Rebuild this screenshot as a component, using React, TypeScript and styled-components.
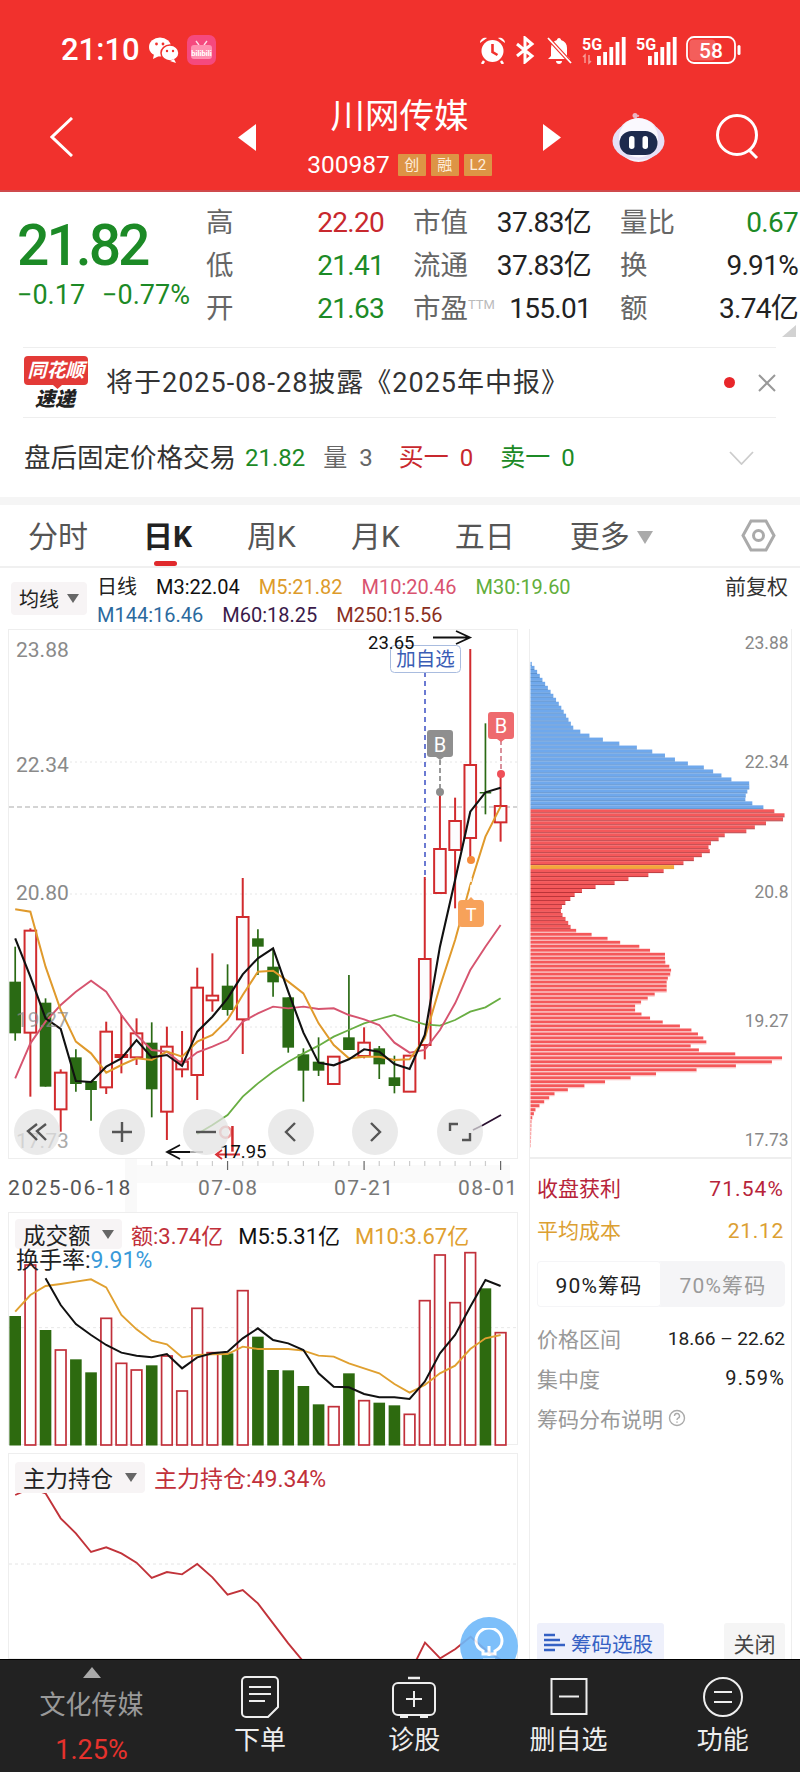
import React from "react";
import styled, { createGlobalStyle } from "styled-components";

const FONT = `Roboto, "Noto Sans CJK SC", sans-serif`;
const RED = "#c8282e";
const GREEN = "#1c8a26";

const Global = createGlobalStyle`
  html, body { margin: 0; padding: 0; background: #fff; }
  body { font-family: ${FONT}; }
  * { box-sizing: border-box; }
`;

const Page = styled.div`
  width: 800px; height: 1772px; display: flex; flex-direction: column; overflow: hidden; background: #fff;
`;

/* ---------- header ---------- */
const Header = styled.header`
  height: 192px; background: #f1312d; border-bottom: 2px solid #cf4a4c; color: #fff; flex: none;
`;
const StatusBar = styled.div`
  height: 87px; padding: 13px 59px 0 61px; display: flex; align-items: center; justify-content: space-between;
`;
const StatusGroup = styled.div<{ $gap: number }>`
  display: flex; align-items: center; gap: ${(p) => p.$gap}px;
`;
const Clock = styled.span`
  font-size: 31px; font-weight: 500; line-height: 36px; margin-right: 1px;
`;
const Nav = styled.div`
  height: 100px; padding-left: 50px; display: flex; align-items: center;
`;
const Spacer = styled.div<{ $w: number }>`
  width: ${(p) => p.$w}px; flex: none;
`;
const Filler = styled.div`
  flex: 1;
`;
const TitleCol = styled.div`
  width: 287px; display: flex; flex-direction: column; align-items: center; flex: none;
`;
const Title = styled.div`
  font-size: 34.5px; line-height: 40px; height: 40px; font-weight: 400;
`;
const SubLine = styled.div`
  margin-top: 16px; height: 26px; display: flex; align-items: center; gap: 5px;
`;
const Code = styled.span`
  font-size: 24.5px; line-height: 26px; margin-right: 3px;
`;
const Tag = styled.span`
  height: 22px; min-width: 28px; padding: 0 3px; background: #dd9445; color: #fdeedd; font-size: 15px; line-height: 22px;
  text-align: center; border-radius: 1px;
`;

/* ---------- quote ---------- */
const Quote = styled.section`
  position: relative; height: 155px; display: flex; padding-left: 17px; flex: none;
`;
const PriceCol = styled.div`
  width: 189px; padding-top: 24px; flex: none;
`;
const BigPrice = styled.div`
  font-size: 57px; line-height: 60px; font-weight: 500; color: ${GREEN}; letter-spacing: -3px;
`;
const Change = styled.div`
  margin-top: 4px; font-size: 27px; line-height: 30px; color: ${GREEN}; display: flex; gap: 17px; white-space: nowrap;
`;
const QuoteGrid = styled.div`
  padding-top: 9px; display: grid; grid-template-columns: repeat(3, 178px); column-gap: 29px; grid-auto-rows: 43px;
`;
const Cell = styled.div`
  display: flex; align-items: center; justify-content: space-between; white-space: nowrap;
`;
const CellLabel = styled.span`
  font-size: 27.5px; line-height: 43px; color: #666;
`;
const Ttm = styled.span`
  font-size: 13px; color: #bbb; vertical-align: 9px; line-height: 0; letter-spacing: 0;
`;
const CellValue = styled.span<{ $c?: string }>`
  font-size: 28px; line-height: 43px; letter-spacing: -0.7px; color: ${(p) => p.$c || "#222"};
`;
const CornerMark = styled.i`
  position: absolute; right: 4px; top: 133px; width: 0; height: 0; border-style: solid;
  border-width: 0 0 12px 14px; border-color: transparent transparent #d2d2d2 transparent;
`;

/* ---------- notice & trade rows ---------- */
const Notice = styled.div`
  margin: 0 24px 0 23px; height: 71px; flex: none; display: flex; align-items: center;
  border-top: 1px solid #eee; border-bottom: 1px solid #eee;
`;
const NoticeText = styled.span`
  margin-left: 18px; font-size: 27px; line-height: 34px; color: #333; white-space: nowrap; letter-spacing: 1px;
`;
const Dot = styled.i`
  margin-left: auto; width: 11px; height: 11px; border-radius: 50%; background: #e8262a;
`;
const TradeRow = styled.div`
  height: 79px; flex: none; padding: 0 46px 0 24px; display: flex; align-items: center; white-space: nowrap;
`;
const TradeText = styled.span<{ $c: string; $ml?: number; $size?: number }>`
  color: ${(p) => p.$c}; margin-left: ${(p) => p.$ml || 0}px; font-size: ${(p) => p.$size || 26.5}px; line-height: 34px;
`;
const Band = styled.div`
  height: 8px; background: #f5f5f5; flex: none;
`;

/* ---------- period tabs ---------- */
const Tabs = styled.nav`
  height: 63px; flex: none; padding: 3px 24px 0 28px; display: flex; align-items: center; gap: 55px;
  border-bottom: 2px solid #f0f0f0;
`;
const Tab = styled.span<{ $active?: boolean }>`
  position: relative; font-size: 30px; line-height: 40px; white-space: nowrap;
  color: ${(p) => (p.$active ? "#222" : "#555")}; font-weight: ${(p) => (p.$active ? 700 : 400)};
  display: flex; align-items: center;
  &::after {
    content: ""; display: ${(p) => (p.$active ? "block" : "none")}; position: absolute; left: 11px; top: 44px;
    width: 23px; height: 5px; border-radius: 3px; background: #e0292c;
  }
`;
const MoreArrow = styled.i`
  margin-left: 7px; width: 0; height: 0; border-style: solid; border-width: 13px 8.5px 0 8.5px;
  border-color: #aaa transparent transparent transparent;
`;
const SettingsIcon = styled.svg`
  margin-left: auto; flex: none; margin-top: -3px;
`;

/* ---------- MA legend ---------- */
const MaBar = styled.div`
  height: 61px; flex: none; padding: 6px 12px 0 11px; display: flex; align-items: flex-start;
`;
const DropBtn = styled.div<{ $w: number; $h: number; $size: number }>`
  width: ${(p) => p.$w}px; height: ${(p) => p.$h}px; background: #f7f4f5; border-radius: 4px; flex: none;
  display: flex; align-items: center; justify-content: space-between; padding: 0 8px 0 8px;
  font-size: ${(p) => p.$size}px; color: #222; white-space: nowrap;
`;
const MaBtnWrap = styled.div`
  padding-top: 8px;
`;
const Caret = styled.i`
  width: 0; height: 0; border-style: solid; border-width: 9px 6.5px 0 6.5px; border-color: #666 transparent transparent transparent;
`;
const MaLines = styled.div`
  margin-left: 10px;
`;
const MaLine = styled.div`
  display: flex; gap: 19px; height: 28px; line-height: 27px; font-size: 20px; white-space: nowrap;
`;
const MaItem = styled.span<{ $c: string }>`
  color: ${(p) => p.$c};
`;
const Restore = styled.span`
  margin-left: auto; font-size: 21px; line-height: 27px; color: #333;
`;

/* ---------- chart area ---------- */
const ChartArea = styled.main`
  height: 1030px; flex: none; overflow: hidden; padding: 0 8px; display: flex; gap: 11px;
`;
const LeftCol = styled.div`
  width: 510px; flex: none; display: flex; flex-direction: column;
`;
const RightCol = styled.aside`
  width: 263px; flex: none; height: 1030px; display: flex; flex-direction: column;
  border-left: 1px solid #eee; border-right: 1px solid #eee;
`;
const ChartPanel = styled.div<{ $h: number }>`
  position: relative; height: ${(p) => p.$h}px; flex: none; box-shadow: inset 0 0 0 1px #eee;
  svg.plot { display: block; overflow: visible; }
`;
const ControlRow = styled.div`
  position: absolute; left: 6px; bottom: 4px; display: flex; gap: 38.6px;
`;
const RoundBtn = styled.div`
  width: 46px; height: 46px; border-radius: 50%; background: rgba(226, 226, 226, 0.72);
  display: flex; align-items: center; justify-content: center;
`;
const Axis = styled.svg`
  display: block; flex: none;
`;
const Legend = styled.div<{ $top: number }>`
  position: absolute; left: 7px; top: ${(p) => p.$top}px; display: flex; align-items: center; font-size: 22px; white-space: nowrap;
`;
const LegendValue = styled.span<{ $c: string; $ml: number; $size?: number }>`
  color: ${(p) => p.$c}; margin-left: ${(p) => p.$ml}px; font-size: ${(p) => p.$size || 22}px;
`;
const TurnoverLine = styled.div`
  position: absolute; left: 8px; top: 35px; font-size: 23px; line-height: 28px; color: #222; white-space: nowrap;
`;
const TurnoverValue = styled.span`
  color: #3a9ad9;
`;
const Gap = styled.div`
  height: 8px; flex: none;
`;
const TipBulb = styled.div`
  position: absolute; left: 452px; top: 164px; width: 58px; height: 58px; border-radius: 50%; background: #6fb9fa; opacity: .9;
  display: flex; align-items: flex-start; justify-content: center; padding-top: 11px;
`;
const SvgLabel = styled.text<{ $size: number; $c: string; $o?: number }>`
  font-family: ${FONT}; font-size: ${(p) => p.$size}px; fill: ${(p) => p.$c}; opacity: ${(p) => p.$o ?? 1};
`;
const GlyphSvg = styled.svg`
  display: block; flex: none; overflow: visible;
`;

/* ---------- chip side panel ---------- */
const ChipPlot = styled.svg`
  display: block; flex: none; border-bottom: 2px solid #eee;
`;
const SideBody = styled.div`
  padding: 9px 6px 0 7px; flex: 1;
`;
const SideStat = styled.div<{ $c: string }>`
  display: flex; justify-content: space-between; height: 42px; line-height: 42px; font-size: 21px; color: ${(p) => p.$c}; padding-right: 1px;
`;
const StatNumber = styled.span<{ $ls: number }>`
  letter-spacing: ${(p) => p.$ls}px;
`;
const Segment = styled.div`
  margin-top: 9px; height: 46px; background: #f5f5f7; border-radius: 5px; display: flex;
`;
const SegItem = styled.div<{ $on?: boolean }>`
  width: 124px; display: flex; align-items: center; justify-content: center; font-size: 21px; letter-spacing: 1.2px; border-radius: 4px;
  background: ${(p) => (p.$on ? "#fff" : "transparent")}; color: ${(p) => (p.$on ? "#222" : "#9a9a9a")};
  box-shadow: ${(p) => (p.$on ? "0 0 0 1px #f5f5f7 inset" : "none")};
`;
const DetailBlock = styled.div`
  margin-top: 11px;
`;
const DetailRow = styled.div`
  display: flex; justify-content: space-between; align-items: center; height: 40px; font-size: 20px; color: #222;
`;
const DetailLabel = styled.span`
  color: #999; font-size: 21px; display: flex; align-items: center; gap: 5px;
`;
const DetailNumber = styled.span<{ $size: number; $ls: number }>`
  font-size: ${(p) => p.$size}px; letter-spacing: ${(p) => p.$ls}px;
`;
const SideActions = styled.div`
  margin-top: 185px; display: flex; justify-content: space-between;
`;
const PickBtn = styled.div`
  width: 127px; height: 40px; background: #eef0fb; border-radius: 3px; display: flex; align-items: center; gap: 6px;
  padding-left: 7px; color: #3561c4; font-size: 20.5px; white-space: nowrap;
`;
const CloseBtn = styled.div`
  width: 61px; height: 40px; background: #f5f5f5; border-radius: 3px; display: flex; align-items: center; justify-content: center;
  color: #444; font-size: 21px;
`;

/* ---------- footer ---------- */
const Footer = styled.footer`
  height: 113px; flex: none; background: #222; border-top: 1px solid #000; display: grid; grid-template-columns: 183px repeat(4, 1fr);
`;
const SectorCell = styled.div`
  display: flex; flex-direction: column; align-items: center; padding-top: 7px;
`;
const UpTri = styled.i`
  width: 0; height: 0; border-style: solid; border-width: 0 9.5px 11px 9.5px; border-color: transparent transparent #aaa transparent;
`;
const SectorName = styled.div`
  margin-top: 10px; font-size: 26px; line-height: 34px; color: #999;
`;
const SectorValue = styled.div`
  margin-top: 11px; font-size: 27px; line-height: 34px; color: #e6322d;
`;
const ActionCell = styled.div`
  display: flex; flex-direction: column; align-items: center; padding-top: 16px;
`;
const ActionIcon = styled.svg`
  display: block; flex: none;
`;
const ActionLabel = styled.div`
  margin-top: 5px; font-size: 26px; line-height: 34px; color: #eee;
`;
const LogoMark = styled.svg`
  flex: none; margin-left: 1px; overflow: visible;
`;

/* ---------- data ---------- */
const X = (i: number) => (45 + 44.9 * i) / 2.96;
const zx = (v: number) => v / 2.96;
const K = (zy: number) => 880 + zy / 3;
const V = (zy: number) => 1200 + zy / 3;
const M = (zy: number) => 1440 + zy / 3;

type C = [0 | 1, number, number, number, number];
// up?, wickTop, wickBottom, bodyTop, bodyBottom  (in zoomed units)
const candles: C[] = [
  [0, 200, 482, 305, 460], [1, 145, 650, 152, 458], [0, 355, 620, 368, 620], [1, 568, 755, 578, 688],
  [0, 508, 635, 532, 612], [0, 603, 722, 603, 630], [1, 425, 642, 455, 622], [1, 405, 580, 525, 531],
  [1, 415, 555, 460, 532], [0, 427, 712, 488, 628], [1, 440, 780, 500, 695], [1, 453, 592, 545, 568],
  [1, 263, 660, 323, 585], [1, 220, 395, 347, 361], [0, 253, 407, 317, 390], [1, -6, 522, 111, 418],
  [0, 148, 285, 175, 200], [0, 205, 350, 260, 307], [0, 352, 518, 352, 503], [0, 505, 665, 523, 572],
  [0, 472, 588, 545, 572], [1, 530, 612, 530, 612], [0, 285, 510, 472, 510], [1, 442, 535, 488, 528],
  [0, 498, 597, 505, 553], [0, 527, 640, 592, 618], [1, 527, 635, 527, 635], [1, -9, 538, 237, 495],
  [1, -265, 39, -93, 39], [1, -247, 85, -177, -90], [1, -693, -60, -345, -126], [0, -470, -197, -264, -262],
  [1, -318, -115, -222, -173],
];
const line = (ys: number[], start = 0) => ys.map((y, i) => `${X(i + start)},${y}`).join(" ");
const m3 = [175, 290, 415, 447, 603, 606, 560, 535, 480, 532, 525, 558, 455, 410, 355, 283, 235, 205, 335, 458, 548, 556, 538, 508, 515, 552, 567, 465, 200, 0, -205, -263, -277].map(K);
const m5 = [88, 95, 260, 390, 485, 520, 578, 555, 535, 540, 515, 530, 485, 465, 420, 345, 275, 272, 305, 340, 430, 495, 535, 530, 530, 540, 538, 475, 320, 180, 15, -130, -220].map(K);
const m10 = [595, 490, 425, 375, 335, 302, 335, 405, 465, 510, 515, 552, 517, 500, 480, 425, 400, 380, 385, 380, 387, 385, 405, 418, 435, 488, 518, 510, 450, 370, 270, 200, 135].map(K);
const m30 = [762, 735, 705, 650, 610, 575, 545, 520, 497, 470, 450, 430, 417, 405, 420, 433, 437, 420, 395, 382, 355].map(K);

const volTops = [348, 195, 390, 450, 478, 517, 355, 490, 510, 496, 468, 573, 325, 458, 460, 272, 410, 510, 511, 558, 613, 620, 520, 602, 608, 616, 643, 302, 165, 308, 158, 265, 398];
const volUp = [0, 1, 0, 1, 0, 0, 1, 1, 1, 0, 1, 1, 1, 1, 0, 1, 0, 0, 0, 0, 0, 1, 0, 1, 0, 0, 1, 1, 1, 1, 1, 0, 1];
const volM5 = [235, 315, 372, 405, 435, 458, 467, 472, 462, 505, 472, 460, 455, 415, 385, 420, 430, 450, 520, 560, 562, 582, 592, 592, 597, 545, 460, 405, 320, 240, 258].map(V);
const volM10 = [335, 285, 258, 252, 245, 238, 262, 345, 388, 422, 433, 472, 465, 463, 462, 440, 447, 447, 447, 452, 467, 470, 490, 505, 520, 552, 578, 555, 520, 497, 447, 415, 405].map(V);
const holdLeft = [165, 145, 160, 235, 280, 336, 322, 340, 368, 414, 396, 403, 372, 412, 464, 450, 490, 550, 610, 665].map(M);
const holdRight: [number, number][] = [[1225, 675], [1258, 608], [1303, 655], [1348, 627], [1393, 590], [1438, 630], [1483, 660]];

const chipA: [number, number][] = [
  [75, 30], [120, 30], [180, 70], [250, 118], [320, 160], [335, 190], [345, 215], [360, 270], [372, 325], [385, 380], [400, 430], [420, 480],
  [440, 560], [460, 600], [480, 650], [487, 695], [505, 685], [530, 675], [540, 680], [550, 710], [565, 750], [572, 770], [582, 795], [590, 816],
  [598, 765], [605, 742], [620, 700], [630, 680], [640, 618], [655, 595], [665, 575], [675, 560], [685, 580], [700, 550], [715, 520], [730, 480],
  [745, 447], [755, 415], [762, 385], [775, 320], [790, 270], [800, 215], [815, 170], [830, 155], [850, 130], [865, 120], [880, 125], [900, 140],
  [925, 155], [935, 180],
];
const chipB: [number, number][] = [
  [10, 205], [20, 250], [35, 295], [47, 355], [60, 390], [70, 435], [95, 435], [110, 450], [125, 455], [150, 440], [180, 440], [195, 395], [210, 375],
  [225, 345], [240, 345], [250, 360], [262, 385], [272, 410], [283, 460], [293, 500], [305, 525], [320, 545], [335, 565], [345, 510], [358, 520],
  [365, 580], [375, 675], [385, 800], [395, 765], [405, 685], [412, 600], [420, 530], [430, 420], [440, 360], [447, 310], [455, 260], [465, 205],
  [478, 150], [490, 105], [505, 85], [525, 60], [540, 45], [570, 33], [655, 31],
];
const chipPts: [number, number][] = [
  ...chipA.map(([y, w]): [number, number] => [620 + y / 3, (w - 30) / 3]),
  ...chipB.map(([y, w]): [number, number] => [930 + y / 3, (w - 30) / 3]),
];
const chipW = (y: number) => {
  for (let i = 1; i < chipPts.length; i++) {
    if (y <= chipPts[i][0]) {
      const [y0, w0] = chipPts[i - 1];
      const [y1, w1] = chipPts[i];
      return w0 + ((w1 - w0) * (y - y0)) / (y1 - y0 || 1);
    }
  }
  return 0.5;
};
const chipRows = Array.from({ length: 126 }, (_, i) => 646 + i * 4);

/* ---------- pieces ---------- */
const Wechat = () => (
  <svg width="30" height="26" viewBox="0 0 30 26">
    <ellipse cx="11" cy="10" rx="11" ry="9.5" fill="#fff" />
    <path d="M5 17l-1 5 6-3z" fill="#fff" />
    <ellipse cx="21" cy="16" rx="9" ry="8" fill="#fff" stroke="#f1312d" strokeWidth="1.5" />
    <path d="M25 22l2 4-6-2z" fill="#fff" />
    <circle cx="7.5" cy="7" r="1.4" fill="#f1312d" /><circle cx="14" cy="7" r="1.4" fill="#f1312d" />
    <circle cx="18" cy="14" r="1.2" fill="#f1312d" /><circle cx="24" cy="14" r="1.2" fill="#f1312d" />
  </svg>
);
const Bili = () => (
  <GlyphSvg width="29" height="30" viewBox="0 0 29 30">
    <rect width="29" height="30" rx="7" fill="#f5497e" />
    <path d="M9 6l3 4M20 6l-3 4" stroke="#fff" strokeWidth="1.4" opacity=".8" />
    <rect x="4" y="10" width="21" height="14" rx="3" fill="#ff8fb0" />
    <SvgLabel x="14.5" y="20.5" textAnchor="middle" $size={7.5} $c="#fff" fontWeight="700">bilibili</SvgLabel>
  </GlyphSvg>
);
const Alarm = () => (
  <svg width="27" height="28" viewBox="0 0 27 28">
    <circle cx="13.5" cy="15" r="11" fill="#fff" />
    <path d="M1 7c0-4 4-6 7-5zM26 7c0-4-4-6-7-5z" fill="#fff" />
    <path d="M13.5 8v8l5 3" stroke="#f1312d" strokeWidth="2.6" fill="none" />
    <path d="M5 25l-2 3M22 25l2 3" stroke="#fff" strokeWidth="2.5" />
  </svg>
);
const Bluetooth = () => (
  <svg width="20" height="28" viewBox="0 0 20 28" fill="none">
    <path d="M2 8l15 12-7 6V2l7 6L2 20" stroke="#fff" strokeWidth="3" />
  </svg>
);
const BellOff = () => (
  <svg width="28" height="29" viewBox="0 0 28 29">
    <path d="M14 2c1.4 0 2 1 2 2 4 1.2 6 4 6 8v8l3 3H3l3-3v-8c0-4 2-6.8 6-8 0-1 .6-2 2-2z" fill="#fff" />
    <path d="M11 25h6c0 2-1.4 3-3 3s-3-1-3-3z" fill="#fff" />
    <path d="M3 2l23 25" stroke="#f1312d" strokeWidth="4" />
    <path d="M3 2l23 25" stroke="#fff" strokeWidth="1.8" />
  </svg>
);
const Signal = ({ w, arrows }: { w: number; arrows?: boolean }) => (
  <GlyphSvg width={w} height="29" viewBox={`0 0 ${w} 29`}>
    <SvgLabel x="0" y="14" $size={16} $c="#fff" fontWeight="700">5G</SvgLabel>
    {arrows && <path d="M3 27v-8l-2 2M7 19v8l2-2" stroke="#f79a96" strokeWidth="1.5" fill="none" />}
    {[0, 1, 2, 3, 4].map((i) => (
      <rect key={i} x={w - 29 + i * 6.2} y={[20, 16, 11, 6, 1][i]} width="3.8" height={[9, 13, 18, 23, 28][i]} fill="#fff" />
    ))}
  </GlyphSvg>
);
const Battery = () => (
  <svg width="55" height="28" viewBox="0 0 55 28">
    <rect x="1" y="1" width="48" height="26" rx="7" fill="none" stroke="#fff" strokeWidth="1.8" />
    <rect x="3.5" y="3.5" width="26" height="21" rx="4" fill="#fff" opacity=".22" />
    <rect x="51.5" y="9" width="3" height="10" rx="1.5" fill="#fff" />
    <SvgLabel x="25" y="22" textAnchor="middle" $size={21} $c="#fff" fontWeight="500">58</SvgLabel>
  </svg>
);
const Robot = () => (
  <svg width="53" height="49" viewBox="0 0 53 49">
    <path d="M24 8c-1-3 0-6 3-5" stroke="#e8a8b8" strokeWidth="2" fill="none" />
    <circle cx="23" cy="2.5" r="2.5" fill="#e9b6c4" />
    <circle cx="26.5" cy="27" r="22" fill="#f4f1fb" />
    <ellipse cx="26.5" cy="28" rx="26" ry="19" fill="#e6e0f6" />
    <circle cx="26.5" cy="25" r="19.5" fill="#faf8fe" />
    <rect x="7.5" y="18" width="38" height="24" rx="12" fill="#1d2a4d" />
    <rect x="17" y="23" width="5.5" height="13" rx="2.7" fill="#fff" />
    <rect x="30.5" y="23" width="5.5" height="13" rx="2.7" fill="#fff" />
  </svg>
);
const Notification = () => (
  <LogoMark width="64" height="53" viewBox="0 0 64 53">
    <rect width="64" height="29" rx="4" fill="#e33a37" />
    <path d="M29 29h9l-4.5 4z" fill="#e33a37" />
    <SvgLabel x="32" y="21" textAnchor="middle" $size={19} $c="#fff" fontWeight="700" fontStyle="italic">同花顺</SvgLabel>
    <SvgLabel x="31" y="50" textAnchor="middle" $size={20} $c="#222" fontWeight="900" fontStyle="italic">速递</SvgLabel>
  </LogoMark>
);
const wrapIcon = (children: React.ReactNode) => (
  <svg width="26" height="26" viewBox="0 0 26 26" fill="none" stroke="#555" strokeWidth="2.4">{children}</svg>
);

const LABEL = "#8a8a8a";

const KChart = () => (
  <svg className="plot" width="510" height="530" viewBox="8 629 510 530">
    {[762, 894, 1027].map((y) => (
      <line key={y} x1="70" x2="517" y1={y} y2={y} stroke="#e6e6e6" strokeDasharray="2 3" />
    ))}
    <line x1="9" x2="517" y1="807" y2="807" stroke="#aaa" strokeWidth="1.2" strokeDasharray="5 3" />
    <line x1="425" x2="425" y1="672" y2="880" stroke="#3b4fc4" strokeWidth="1.5" strokeDasharray="5 4" />
    <line x1="440" x2="440" y1="760" y2="792" stroke="#555" strokeWidth="1.2" strokeDasharray="5 3" />
    <line x1="501" x2="501" y1="740" y2="774" stroke="#c0485a" strokeWidth="1.2" strokeDasharray="5 3" />
    {candles.map(([up, wt, wb, bt, bb], i) => {
      const x = X(i);
      const c = up ? "#d12b2e" : "#2a6a14";
      return (
        <g key={i}>
          <line x1={x} x2={x} y1={K(wt)} y2={K(wb)} stroke={c} strokeWidth={up ? 2 : 1.7} />
          {up ? (
            <rect x={x - 5.8} y={K(bt)} width="11.6" height={Math.max(K(bb) - K(bt), 2)} fill="#fcfcfe" stroke={c} strokeWidth="2" />
          ) : (
            <rect x={x - 5.8} y={K(bt)} width="11.6" height={Math.max(K(bb) - K(bt), 1.5)} fill={c} />
          )}
        </g>
      );
    })}
    <polyline points={line(m30, 12)} fill="none" stroke="#69ae43" strokeWidth="1.8" />
    <polyline points={line(m10)} fill="none" stroke="#d6546f" strokeWidth="1.9" />
    <polyline points={line(m5)} fill="none" stroke="#e09a2c" strokeWidth="2" />
    <polyline points={line(m3)} fill="none" stroke="#111" strokeWidth="2.1" />
    <polyline points={`${zx(1400)},${K(750)} ${zx(1430)},${K(735)} ${zx(1483)},${K(705)}`} fill="none" stroke="#2a1030" strokeWidth="1.8" />

    <circle cx="440" cy="792" r="4" fill="#8d8d8d" />
    <circle cx="501" cy="774" r="4" fill="#ef4f58" />
    <circle cx="471" cy="860" r="4" fill="#f58b3a" />
    <line x1="471" x2="471" y1="864" y2="897" stroke="#fff" strokeWidth="1.5" strokeDasharray="4 3" />
    <path d="M427 733a3 3 0 0 1 3-3h20a3 3 0 0 1 3 3v21a3 3 0 0 1-3 3h-6l-4 3-4-3h-6a3 3 0 0 1-3-3z" fill="#8f8f8f" />
    <SvgLabel x="440" y="752" textAnchor="middle" $size={20} $c="#fff">B</SvgLabel>
    <path d="M488 715a3 3 0 0 1 3-3h20a3 3 0 0 1 3 3v21a3 3 0 0 1-3 3h-6l-4 3-4-3h-6a3 3 0 0 1-3-3z" fill="#ee6a6e" />
    <SvgLabel x="501" y="733" textAnchor="middle" $size={20} $c="#fff">B</SvgLabel>
    <path d="M458 904a4 4 0 0 1 4-4h6l3-3 3 3h6a4 4 0 0 1 4 4v19a4 4 0 0 1-4 4h-18a4 4 0 0 1-4-4z" fill="#f7a25a" />
    <SvgLabel x="471" y="921" textAnchor="middle" $size={18} $c="#fff">T</SvgLabel>

    <rect x="390.5" y="645.5" width="70" height="27" rx="4" fill="#fff" stroke="#a9bcdf" />
    <SvgLabel x="425.5" y="666" textAnchor="middle" $size={19.5} $c="#3a5db5">加自选</SvgLabel>
    <SvgLabel x="368" y="649" $size={18.5} $c="#111">23.65</SvgLabel>
    <path d="M433 637.5h37M456 631l14 6.5-14 6.5" fill="none" stroke="#111" strokeWidth="1.8" />

    <circle cx={zx(668)} cy={K(757)} r="5.5" fill="none" stroke="#f0a0a0" strokeWidth="2.5" />
    <line x1={zx(688)} x2={zx(688)} y1={K(738)} y2={K(815)} stroke="#d12b2e" strokeWidth="2.5" />
    <path d="M240 1154.5h-24M222 1150l-6 4.5 6 4.5" fill="none" stroke="#d9343a" strokeWidth="1.8" />
    <path d="M203 1152h-36M180 1145l-13 7 13 7" fill="none" stroke="#111" strokeWidth="1.8" />
    <line x1="190" x2="203" y1="1152" y2="1152" stroke="#aaa" strokeWidth="2" />
    <SvgLabel x="220" y="1158" $size={18.5} $c="#111">17.95</SvgLabel>

    <SvgLabel x="16" y="657" $size={21} $c={LABEL}>23.88</SvgLabel>
    <SvgLabel x="16" y="772" $size={21} $c={LABEL}>22.34</SvgLabel>
    <SvgLabel x="16" y="900" $size={21} $c={LABEL}>20.80</SvgLabel>
    <SvgLabel x="16" y="1027" $size={21} $c={LABEL} $o={0.72}>19.27</SvgLabel>
    <SvgLabel x="16" y="1148" $size={21} $c={LABEL} $o={0.72}>17.73</SvgLabel>
  </svg>
);

const Controls = () => (
  <ControlRow>
    <RoundBtn>{wrapIcon(<path d="M13 5l-9 7 9 9M22 5l-9 7 9 9" />)}</RoundBtn>
    <RoundBtn>{wrapIcon(<path d="M13 3v20M3 13h20" />)}</RoundBtn>
    <RoundBtn>{wrapIcon(<path d="M3 13h20" />)}</RoundBtn>
    <RoundBtn>{wrapIcon(<path d="M17 4l-9 9 9 9" />)}</RoundBtn>
    <RoundBtn>{wrapIcon(<path d="M9 4l9 9-9 9" />)}</RoundBtn>
    <RoundBtn>{wrapIcon(<path d="M3 12V5h8M23 14v7h-8" />)}</RoundBtn>
  </ControlRow>
);

const TimeAxis = () => (
  <Axis width="510" height="53" viewBox="8 1159 510 53">
    <rect x="125" y="1159" width="12" height="53" fill="#f9f9f9" />
    <rect x="137" y="1165" width="373" height="18" fill="#fafafa" />
    {candles.map((_, i) =>
      i >= 9 ? (
        <line key={i} x1={X(i)} x2={X(i)} y1="1161" y2={i === 14 || i === 23 || i === 32 ? 1170 : 1166}
          stroke={i === 14 || i === 23 || i === 32 ? "#666" : "#ccc"} strokeWidth="1.2" />
      ) : null
    )}
    <SvgLabel x="8" y="1195" $size={21} $c="#555" letterSpacing="1.8">2025-06-18</SvgLabel>
    <SvgLabel x="198" y="1195" $size={21} $c="#777" letterSpacing="1.5">07-08</SvgLabel>
    <SvgLabel x="334" y="1195" $size={21} $c="#777" letterSpacing="1.5">07-21</SvgLabel>
    <SvgLabel x="458" y="1195" $size={21} $c="#777" letterSpacing="1.5">08-01</SvgLabel>
  </Axis>
);

const VolumeChart = () => (
  <svg className="plot" width="510" height="234" viewBox="8 1212 510 234">
    <line x1="9" x2="517" y1={V(383)} y2={V(383)} stroke="#e8e8e8" strokeDasharray="3 3" />
    {volTops.map((t, i) => {
      const x = X(i);
      return volUp[i] ? (
        <rect key={i} x={x - 5.3} y={V(t)} width="10.6" height={1445 - V(t)} fill="#fff" stroke="#c1303a" strokeWidth="1.7" />
      ) : (
        <rect key={i} x={x - 5.8} y={V(t)} width="11.6" height={1445.5 - V(t)} fill="#2d6a0f" />
      );
    })}
    <polyline points={line(volM10)} fill="none" stroke="#e0a030" strokeWidth="1.9" />
    <polyline points={line(volM5, 2)} fill="none" stroke="#111" strokeWidth="2" />
  </svg>
);

const HoldChart = () => (
  <svg className="plot" width="510" height="206" viewBox="8 1453 510 206">
    <line x1="9" x2="517" y1={M(372)} y2={M(372)} stroke="#e4e4e4" strokeDasharray="3 3" />
    <polyline points={line(holdLeft)} fill="none" stroke="#c1333a" strokeWidth="1.9" />
    <polyline points={holdRight.map(([a, b]) => `${zx(a)},${M(b)}`).join(" ")} fill="none" stroke="#c1333a" strokeWidth="1.9" />
  </svg>
);

const ChipChart = () => (
  <ChipPlot width="261" height="530" viewBox="530 629 261 530">
    {chipRows.map((y) => {
      const w = chipW(y);
      const blue = y < 810;
      const orange = y > 865 && y < 870;
      const light = blue ? "#6fa8ec" : orange ? "#f4a63c" : "#f4585a";
      const dark = blue ? "#3a7ac4" : orange ? "#e89a30" : y < 930 ? "#bb3338" : "#f8c4c4";
      return (
        <g key={y}>
          <rect x="530" y={y} width={w} height="3" fill={light} />
          <rect x="530" y={y + 3} width={w} height="1" fill={dark} />
        </g>
      );
    })}
    <SvgLabel x="789" y="649" textAnchor="end" $size={17.5} $c="#888">23.88</SvgLabel>
    <SvgLabel x="789" y="769" textAnchor="end" $size={17.5} $c="#888">22.34</SvgLabel>
    <SvgLabel x="789" y="899" textAnchor="end" $size={17.5} $c="#888">20.8</SvgLabel>
    <SvgLabel x="789" y="1029" textAnchor="end" $size={17.5} $c="#888">19.27</SvgLabel>
    <SvgLabel x="789" y="1148" textAnchor="end" $size={17.5} $c="#888">17.73</SvgLabel>
  </ChipPlot>
);

export default function App() {
  return (
    <Page>
      <Global />
      <Header>
        <StatusBar>
          <StatusGroup $gap={8}>
            <Clock>21:10</Clock>
            <Wechat />
            <Bili />
          </StatusGroup>
          <StatusGroup $gap={9.4}>
            <Alarm />
            <Bluetooth />
            <BellOff />
            <Signal w={44} arrows />
            <Signal w={41} />
            <Battery />
          </StatusGroup>
        </StatusBar>
        <Nav>
          <svg width="23" height="40" viewBox="0 0 23 40" fill="none"><path d="M22 1L2 20l20 19" stroke="#fff" strokeWidth="3" /></svg>
          <Spacer $w={165} />
          <svg width="18" height="27" viewBox="0 0 18 27"><path d="M18 0v27L0 13.5z" fill="#fff" /></svg>
          <TitleCol>
            <Title>川网传媒</Title>
            <SubLine>
              <Code>300987</Code>
              <Tag>创</Tag>
              <Tag>融</Tag>
              <Tag>L2</Tag>
            </SubLine>
          </TitleCol>
          <svg width="18" height="27" viewBox="0 0 18 27"><path d="M0 0v27l18-13.5z" fill="#fff" /></svg>
          <Spacer $w={51} />
          <Robot />
          <Spacer $w={51} />
          <svg width="46" height="46" viewBox="0 0 46 46" fill="none">
            <circle cx="21" cy="21" r="19.5" stroke="#fff" strokeWidth="3" />
            <path d="M33 36l8 8" stroke="#fff" strokeWidth="3" />
          </svg>
        </Nav>
      </Header>

      <Quote>
        <PriceCol>
          <BigPrice>21.82</BigPrice>
          <Change><span>−0.17</span><span>−0.77%</span></Change>
        </PriceCol>
        <QuoteGrid>
          <Cell><CellLabel>高</CellLabel><CellValue $c={RED}>22.20</CellValue></Cell>
          <Cell><CellLabel>市值</CellLabel><CellValue>37.83亿</CellValue></Cell>
          <Cell><CellLabel>量比</CellLabel><CellValue $c={GREEN}>0.67</CellValue></Cell>
          <Cell><CellLabel>低</CellLabel><CellValue $c={GREEN}>21.41</CellValue></Cell>
          <Cell><CellLabel>流通</CellLabel><CellValue>37.83亿</CellValue></Cell>
          <Cell><CellLabel>换</CellLabel><CellValue>9.91%</CellValue></Cell>
          <Cell><CellLabel>开</CellLabel><CellValue $c={GREEN}>21.63</CellValue></Cell>
          <Cell><CellLabel>市盈<Ttm>TTM</Ttm></CellLabel><CellValue>155.01</CellValue></Cell>
          <Cell><CellLabel>额</CellLabel><CellValue>3.74亿</CellValue></Cell>
        </QuoteGrid>
        <CornerMark />
      </Quote>

      <Notice>
        <Notification />
        <NoticeText>将于2025-08-28披露《2025年中报》</NoticeText>
        <Dot />
        <Spacer $w={23} />
        <svg width="18" height="18" viewBox="0 0 18 18" fill="none"><path d="M1 1l16 16M17 1L1 17" stroke="#999" strokeWidth="2" /></svg>
      </Notice>

      <TradeRow>
        <TradeText $c="#333">盘后固定价格交易</TradeText>
        <TradeText $c={GREEN} $ml={9} $size={24}>21.82</TradeText>
        <TradeText $c="#666" $ml={18} $size={24}>量</TradeText>
        <TradeText $c="#666" $ml={12} $size={24}>3</TradeText>
        <TradeText $c={RED} $ml={26} $size={25}>买一</TradeText>
        <TradeText $c={RED} $ml={11} $size={24}>0</TradeText>
        <TradeText $c={GREEN} $ml={27} $size={25}>卖一</TradeText>
        <TradeText $c={GREEN} $ml={11} $size={24}>0</TradeText>
        <Filler />
        <svg width="25" height="14" viewBox="0 0 25 14" fill="none"><path d="M1 1l11.5 12L24 1" stroke="#ccc" strokeWidth="1.8" /></svg>
      </TradeRow>
      <Band />

      <Tabs>
        <Tab>分时</Tab>
        <Tab $active>日K</Tab>
        <Tab>周K</Tab>
        <Tab>月K</Tab>
        <Tab>五日</Tab>
        <Tab>更多<MoreArrow /></Tab>
        <SettingsIcon width="35" height="33" viewBox="0 0 35 33" fill="none">
          <path d="M10 2h15l8 14.5L25 31H10L2 16.5z" stroke="#aaa" strokeWidth="3" />
          <circle cx="17.5" cy="16.5" r="5" stroke="#aaa" strokeWidth="3" />
        </SettingsIcon>
      </Tabs>

      <MaBar>
        <MaBtnWrap>
          <DropBtn $w={76} $h={33} $size={20}>均线<Caret /></DropBtn>
        </MaBtnWrap>
        <MaLines>
          <MaLine>
            <MaItem $c="#222">日线</MaItem>
            <MaItem $c="#111">M3:22.04</MaItem>
            <MaItem $c="#dd9b2a">M5:21.82</MaItem>
            <MaItem $c="#d9536f">M10:20.46</MaItem>
            <MaItem $c="#62ae3c">M30:19.60</MaItem>
          </MaLine>
          <MaLine>
            <MaItem $c="#2b6a9e">M144:16.46</MaItem>
            <MaItem $c="#3a1a4a">M60:18.25</MaItem>
            <MaItem $c="#8a2f1f">M250:15.56</MaItem>
          </MaLine>
        </MaLines>
        <Restore>前复权</Restore>
      </MaBar>

      <ChartArea>
        <LeftCol>
          <ChartPanel $h={530}>
            <KChart />
            <Controls />
          </ChartPanel>
          <TimeAxis />
          <ChartPanel $h={233}>
            <VolumeChart />
            <Legend $top={6}>
              <DropBtn $w={107} $h={30} $size={22.5}>成交额<Caret /></DropBtn>
              <LegendValue $c="#c1303a" $ml={9}>额:3.74亿</LegendValue>
              <LegendValue $c="#111" $ml={15}>M5:5.31亿</LegendValue>
              <LegendValue $c="#e0a030" $ml={15}>M10:3.67亿</LegendValue>
            </Legend>
            <TurnoverLine>换手率:<TurnoverValue>9.91%</TurnoverValue></TurnoverLine>
          </ChartPanel>
          <Gap />
          <ChartPanel $h={206}>
            <HoldChart />
            <Legend $top={7}>
              <DropBtn $w={130} $h={31} $size={22.5}>主力持仓<Caret /></DropBtn>
              <LegendValue $c="#c1303a" $ml={9} $size={23}>主力持仓:49.34%</LegendValue>
            </Legend>
            <TipBulb>
              <svg width="30" height="36" viewBox="0 0 30 36" fill="none" stroke="#fff" strokeWidth="3">
                <path d="M9 26v-3C5 21 2 17 2 13a13 13 0 0 1 26 0c0 4-3 8-7 10v3z" />
                <path d="M15 18v10M9 32h12" />
              </svg>
            </TipBulb>
          </ChartPanel>
        </LeftCol>

        <RightCol>
          <ChipChart />
          <SideBody>
            <SideStat $c="#b7243a"><span>收盘获利</span><StatNumber $ls={1.1}>71.54%</StatNumber></SideStat>
            <SideStat $c="#dca032"><span>平均成本</span><StatNumber $ls={0.7}>21.12</StatNumber></SideStat>
            <Segment>
              <SegItem $on>90%筹码</SegItem>
              <SegItem>70%筹码</SegItem>
            </Segment>
            <DetailBlock>
              <DetailRow><DetailLabel>价格区间</DetailLabel><DetailNumber $size={19.2} $ls={-0.1}>18.66 – 22.62</DetailNumber></DetailRow>
              <DetailRow><DetailLabel>集中度</DetailLabel><DetailNumber $size={20} $ls={1.2}>9.59%</DetailNumber></DetailRow>
              <DetailRow>
                <DetailLabel>
                  筹码分布说明
                  <svg width="18" height="18" viewBox="0 0 18 18" fill="none" stroke="#aaa" strokeWidth="1.4">
                    <circle cx="9" cy="9" r="7.5" />
                    <path d="M6.5 7a2.5 2.5 0 1 1 3.6 2.2c-.8.4-1.1.8-1.1 1.8M9 12.5v1.2" />
                  </svg>
                </DetailLabel>
              </DetailRow>
            </DetailBlock>
            <SideActions>
              <PickBtn>
                <svg width="21" height="20" viewBox="0 0 21 20" stroke="#3561c4" strokeWidth="2.4">
                  <path d="M0 2h11M0 7h16M0 12h21M0 17h11" />
                </svg>
                筹码选股
              </PickBtn>
              <CloseBtn>关闭</CloseBtn>
            </SideActions>
          </SideBody>
        </RightCol>
      </ChartArea>

      <Footer>
        <SectorCell>
          <UpTri />
          <SectorName>文化传媒</SectorName>
          <SectorValue>1.25%</SectorValue>
        </SectorCell>
        <ActionCell>
          <ActionIcon width="38" height="42" viewBox="0 0 38 42" fill="none" stroke="#eee" strokeWidth="2">
            <path d="M5 1h28a4 4 0 0 1 4 4v26l-10 10H5a4 4 0 0 1-4-4V5a4 4 0 0 1 4-4z" />
            <path d="M8 11h22M8 18h22M8 25h16" />
          </ActionIcon>
          <ActionLabel>下单</ActionLabel>
        </ActionCell>
        <ActionCell>
          <ActionIcon width="44" height="42" viewBox="0 0 44 42" fill="none" stroke="#eee" strokeWidth="2">
            <path d="M16 2h12" strokeWidth="2.5" />
            <rect x="1" y="7" width="42" height="32" rx="5" />
            <path d="M22 15v16M14 23h16M8 41h8M28 41h8" />
          </ActionIcon>
          <ActionLabel>诊股</ActionLabel>
        </ActionCell>
        <ActionCell>
          <ActionIcon width="38" height="42" viewBox="0 0 38 42" fill="none" stroke="#eee" strokeWidth="2">
            <rect x="1.5" y="3" width="35" height="35" />
            <path d="M9 20.5h20" />
          </ActionIcon>
          <ActionLabel>删自选</ActionLabel>
        </ActionCell>
        <ActionCell>
          <ActionIcon width="40" height="42" viewBox="0 0 40 42" fill="none" stroke="#eee" strokeWidth="2">
            <circle cx="20" cy="21" r="19" />
            <path d="M11 16h18M11 26h18" />
          </ActionIcon>
          <ActionLabel>功能</ActionLabel>
        </ActionCell>
      </Footer>
    </Page>
  );
}
